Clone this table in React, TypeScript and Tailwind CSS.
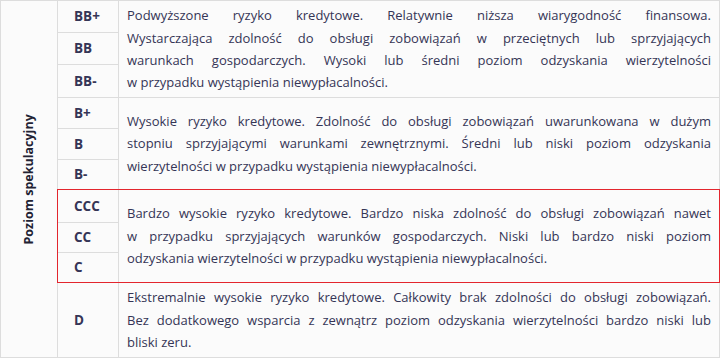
import React from "react";

type Group = {
  ratings: string[];
  rowHeights: string[];
  lines: string[];
  box: string;
};

const groups: Group[] = [
  {
    ratings: ["BB+", "BB", "BB-"],
    rowHeights: ["h-[32px]", "h-[32px]", "flex-1"],
    lines: [
      "Podwyższone ryzyko kredytowe. Relatywnie niższa wiarygodność finansowa.",
      "Wystarczająca zdolność do obsługi zobowiązań w przeciętnych lub sprzyjających",
      "warunkach gospodarczych. Wysoki lub średni poziom odzyskania wierzytelności",
      "w przypadku wystąpienia niewypłacalności.",
    ],
    box: "h-[98px] border border-[#dddddd]",
  },
  {
    ratings: ["B+", "B", "B-"],
    rowHeights: ["h-[31px]", "h-[31px]", "flex-1"],
    lines: [
      "Wysokie ryzyko kredytowe. Zdolność do obsługi zobowiązań uwarunkowana w dużym",
      "stopniu sprzyjającymi warunkami zewnętrznymi. Średni lub niski poziom odzyskania",
      "wierzytelności w przypadku wystąpienia niewypłacalności.",
    ],
    box: "h-[91px] border-x border-[#dddddd]",
  },
  {
    ratings: ["CCC", "CC", "C"],
    rowHeights: ["h-[33px]", "h-[30px]", "flex-1"],
    lines: [
      "Bardzo wysokie ryzyko kredytowe. Bardzo niska zdolność do obsługi zobowiązań nawet",
      "w przypadku sprzyjających warunków gospodarczych. Niski lub bardzo niski poziom",
      "odzyskania wierzytelności w przypadku wystąpienia niewypłacalności.",
    ],
    box: "h-[94px] border border-[#e3262e]",
  },
  {
    ratings: ["D"],
    rowHeights: ["flex-1"],
    lines: [
      "Ekstremalnie wysokie ryzyko kredytowe. Całkowity brak zdolności do obsługi zobowiązań.",
      "Bez dodatkowego wsparcia z zewnątrz poziom odzyskania wierzytelności bardzo niski lub",
      "bliski zeru.",
    ],
    box: "h-[75px] border-x border-b border-[#dddddd]",
  },
];

function RatingGroup({ group }: { group: Group }) {
  return (
    <div className={`flex ${group.box}`}>
      <div className="flex w-[61px] shrink-0 flex-col border-r border-[#dddddd]">
        {group.ratings.map((r, i) => (
          <div
            key={r}
            className={`flex items-center pl-[16px] text-[13.5px] font-bold ${group.rowHeights[i]} ${
              i < group.ratings.length - 1 ? "border-b border-[#dddddd]" : ""
            }`}
          >
            {r}
          </div>
        ))}
      </div>
      <div className="flex flex-1 flex-col justify-center px-[8px] text-[13px] leading-[22.4px]">
        {group.lines.map((line, i) => (
          <div key={i} className={i < group.lines.length - 1 ? "text-justify [text-align-last:justify]" : ""}>
            {line}
          </div>
        ))}
      </div>
    </div>
  );
}

export default function App() {
  return (
    <div className="h-[359px] w-[720px] overflow-hidden bg-white font-['Open_Sans','Noto_Sans',sans-serif] text-[#353556]">
      <div className="flex bg-[#fbfbfb]">
        <div className="flex h-[358px] w-[57px] shrink-0 items-center justify-center border-y border-l border-[#dddddd]">
          <span className="-rotate-90 whitespace-nowrap text-[12.5px] font-bold text-[#222233]">Poziom spekulacyjny</span>
        </div>
        <div className="flex w-[663px] flex-col">
          {groups.map((g) => (
            <RatingGroup key={g.ratings[0]} group={g} />
          ))}
        </div>
      </div>
    </div>
  );
}
